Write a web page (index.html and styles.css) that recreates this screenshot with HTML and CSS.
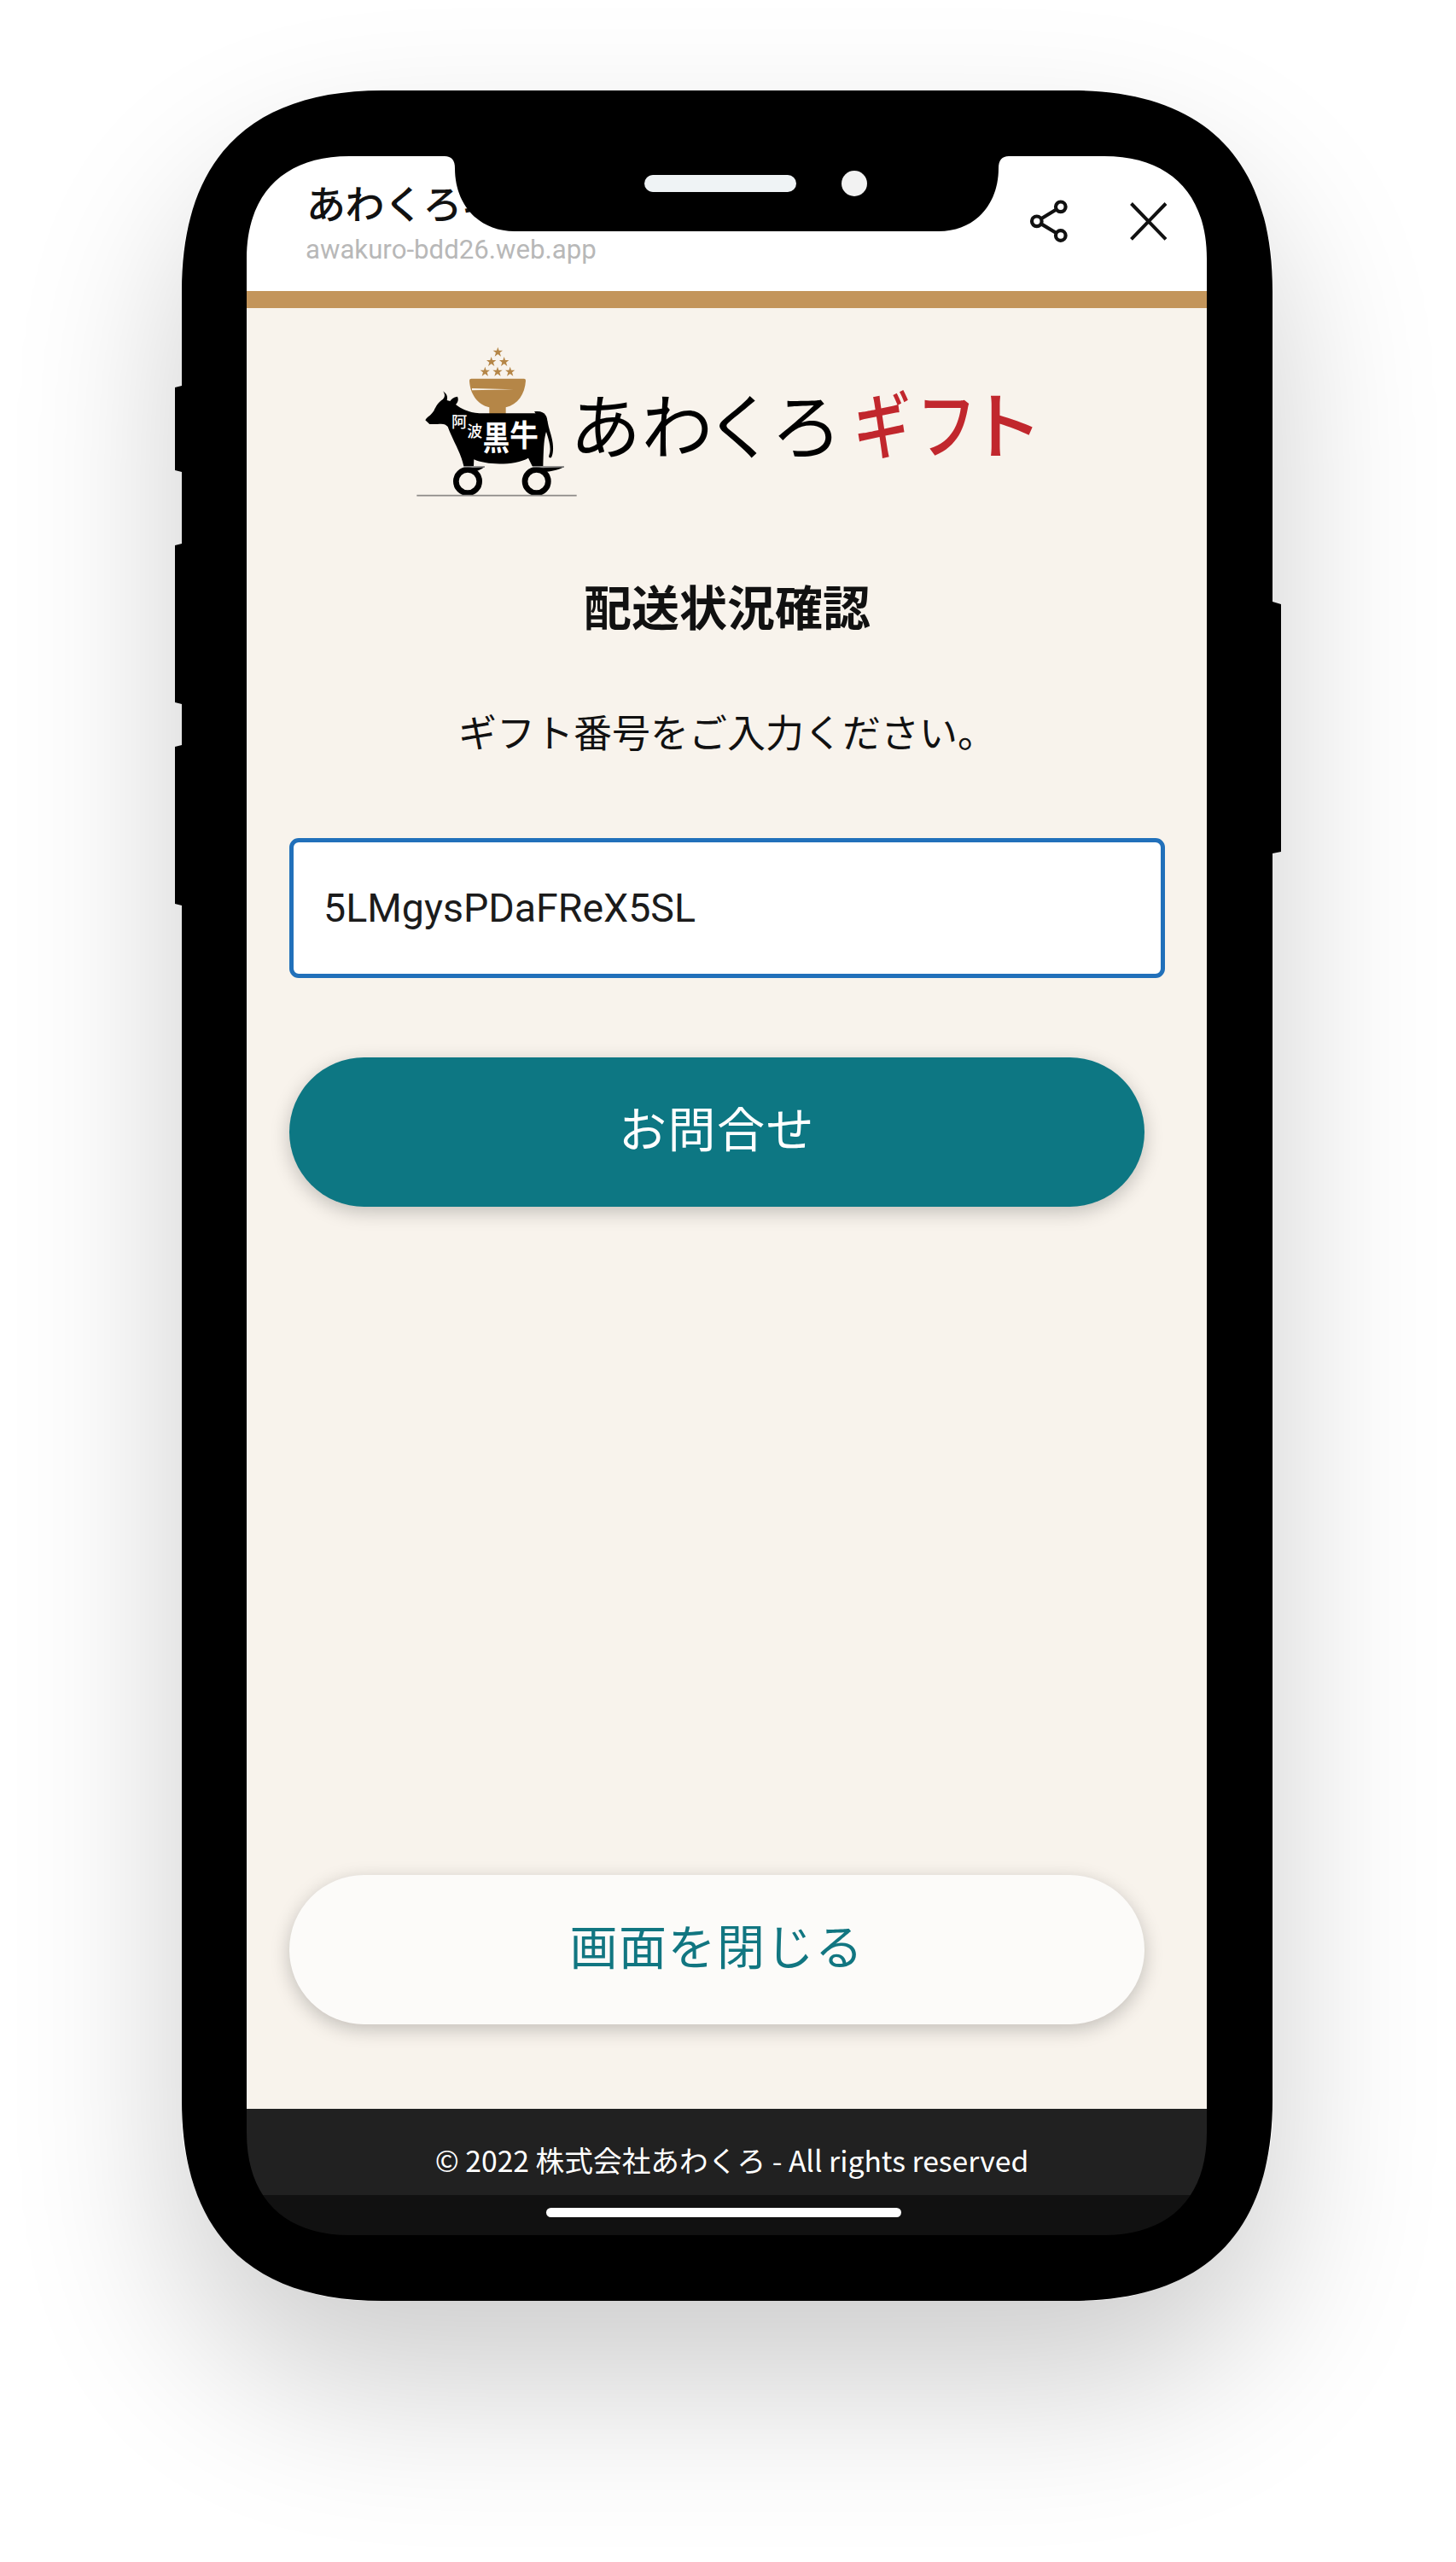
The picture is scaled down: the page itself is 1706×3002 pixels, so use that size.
FILE: index.html
```html
<!DOCTYPE html>
<html lang="ja">
<head>
<meta charset="utf-8">
<title>あわくろギフト</title>
<link rel="stylesheet" href="styles.css">
</head>
<body>
<main class="stage">
  <div class="phone">
    <div class="screen">
      <header class="browser-bar">
        <div class="page-info">
          <div class="page-title">あわくろギフト</div>
          <div class="page-url">awakuro-bdd26.web.app</div>
        </div>
        <svg class="bar-icon" width="50" height="50" viewBox="0 0 50 50" fill="none" stroke="#111" stroke-width="4.2">
          <circle cx="38.8" cy="8.3" r="5.8"/><circle cx="10.8" cy="25.3" r="5.8"/><circle cx="38.8" cy="42" r="5.8"/>
          <path d="M16 22.2 33.6 11.5M16 28.4 33.6 39"/>
        </svg>
        <svg class="bar-icon" width="50" height="50" viewBox="0 0 50 50" fill="none" stroke="#111" stroke-width="4">
          <path d="M4.500 4.500 45 46.3M45 4.500 4.500 46.3"/>
        </svg>
      </header>
      <div class="page">
        <svg class="logo" width="760" height="210" viewBox="0 0 2280 630">
          <g fill="#b58647">
            <g>
              <path id="star" d="M310 50l4 12h13l-10 8 4 13-11-8-11 8 4-13-10-8h13z"/>
              <use href="#star" x="-23" y="34"/><use href="#star" x="22" y="34"/>
              <use href="#star" x="-45" y="69"/><use href="#star" x="-1" y="69"/><use href="#star" x="43" y="69"/>
            </g>
            <path d="M217 161H402Q408 161 408 168C405 216 380 252 338 262V290H280V262C238 252 212 214 210 168Q210 161 217 161Z"/>
          </g>
          <path d="M219 195L365 198.500L219 202Z" fill="#f8f3ec"/>
          <path d="M117 205C132 215 134 225 131 237L142 240C147 232 154 226 168 224C173 235 169 244 162 252C180 266 205 280 245 283H448C474 283 481 296 486 318C491 345 503 370 504 400C505 420 501 434 497 439C491 440 488 437 490 431C499 407 491 382 480 348C471 375 471 410 469 469H431L417 440C370 467 270 466 226 445L225 469H190C180 420 154 384 134 330C127 321 117 318 98 321H70L55 307C60 296 70 293 77 284C90 271 92 252 111 238C125 229 126 217 117 205Z"/>
          <path d="M438 277C475 271 486 294 484 320L455 300Z"/>
          <g fill="none" stroke="#000">
            <circle cx="204" cy="522" r="41" stroke-width="20"/>
            <circle cx="446" cy="522" r="41" stroke-width="20"/>
          </g>
          <path d="M190 476 264 471C250 482 236 486 224 490M432 476 543 471C520 484 490 488 464 490"/>
          <path d="M190 471H264M432 471H543" stroke="#777" stroke-width="4"/>
          <path d="M25 572H587" stroke="#8d8a87" stroke-width="5"/>
          <g class="cow-text">
            <text x="147" y="334" font-size="55">阿</text>
            <text x="202" y="366" font-size="54">波</text>
            <text transform="translate(257 412) scale(.87 1.08)" font-size="108" class="heavy">黒</text>
            <text transform="translate(352 400) scale(.95 1)" font-size="106" class="heavy">牛</text>
          </g>
          <text class="logo-black" y="424" x="563 815 1038 1270">あわくろ</text>
          <g class="logo-red">
            <text transform="translate(1560 424) scale(.78 1)">ギ</text>
            <text transform="translate(1781 424) scale(.82 1)">フ</text>
            <text transform="translate(1957 424) scale(1.05 1)">ト</text>
          </g>
        </svg>
        <h1 class="heading">配送状況確認</h1>
        <p class="lead">ギフト番号をご入力ください。</p>
        <div class="field">5LMgysPDaFReX5SL</div>
        <div class="button primary">お問合せ</div>
        <div class="button secondary">画面を閉じる</div>
      </div>
      <footer class="copyright">© 2022 株式会社あわくろ - All rights reserved</footer>
      <div class="home-area"><div class="home-bar"></div></div>
    </div>
    <svg class="frame" width="1298" height="2590" viewBox="203 106 1298 2590">
      <path fill-rule="evenodd" d="M213 341C213 186 293 106 448 106H1256C1411 106 1491 186 1491 341V2461C1491 2616 1411 2696 1256 2696H448C293 2696 213 2616 213 2461ZM289 303C289 227 333 183 409 183H521Q533 183 533 197C533 240 561 271 603 271H1100C1142 271 1170 240 1170 197Q1170 183 1182 183H1294C1370 183 1414 227 1414 303V2499C1414 2575 1370 2619 1294 2619H409C333 2619 289 2575 289 2499Z"/>
      <path d="M213 452 205 454V551L213 553ZM213 637 205 639V823L213 825ZM213 873 205 875V1059L213 1061ZM1491 705 1501 708V998L1491 1000Z"/>
      <rect x="755" y="205" width="178" height="20" rx="10" fill="#eff3f5"/>
      <circle cx="1001" cy="215" r="15" fill="#f2f2f2"/>
    </svg>
  </div>
</main>
</body>
</html>
```
FILE: styles.css
```css
* { box-sizing: border-box; }
body { margin: 0; background: #fff; font-family: "Noto Sans CJK JP", sans-serif; color: #111; }
.stage { width: 1706px; height: 3002px; padding: 106px 0 0 213px; overflow: hidden; }
.phone { position: relative; width: 1278px; height: 2590px; padding: 77px 77px 77px 76px; border-radius: 215px; box-shadow: 0 96px 200px rgba(0, 0, 0, .2); }
.frame { position: absolute; left: -10px; top: 0; }
.screen { display: flex; flex-direction: column; height: 2436px; background: #f8f3ec; border-radius: 80px; overflow: hidden; }

.browser-bar { display: flex; align-items: flex-start; height: 178px; padding: 25px 43px 0 69px; background: #fff; border-bottom: 20px solid #c3955b; gap: 67px; }
.page-info { flex: 1; }
.page-title { font-size: 46px; line-height: 56px; font-weight: 500; letter-spacing: -.5px; padding-left: 1px; white-space: nowrap; }
.page-url { margin-top: 10px; font: 31.2px/38px Roboto, sans-serif; color: #b8b8b8; white-space: nowrap; }
.bar-icon { margin-top: 26px; flex: none; }

.page { flex: 1; display: flex; flex-direction: column; padding: 29px 49px 0 50px; }
.logo { display: block; margin-left: 141px; flex: none; }
.logo text { font-family: "Noto Sans CJK JP", sans-serif; }
.cow-text { fill: #fff; font-weight: 500; }
.cow-text .heavy { font-weight: 700; }
.logo-black { font-size: 250px; font-weight: 400; fill: #000; }
.logo-red { font-size: 258px; font-weight: 500; fill: #c1272d; }
.heading { margin: 69px 0 0; font-size: 56px; line-height: 80px; font-weight: 700; text-align: center; }
.lead { margin: 76px 0 0; font-size: 45px; line-height: 64px; text-align: center; }
.field { margin-top: 93px; height: 164px; border: 5px solid #2170ba; border-radius: 11px; background: #fff; padding: 0 35px; font: 46.5px/154px Roboto, sans-serif; color: #1b1b1b; }
.button { width: 1002px; height: 175px; border-radius: 88px; font-size: 56px; line-height: 161px; text-align: center; letter-spacing: 1.5px; box-shadow: 0 6px 22px rgba(0, 0, 0, .22); }
.primary { margin-top: 93px; background: #0d7783; color: #fff; }
.secondary { margin-top: 783px; background: #fcfbf9; color: #117681; }

.copyright { height: 101px; background: #212121; color: #fff; font-size: 33.7px; line-height: 120px; text-align: center; padding-left: 12px; white-space: nowrap; }
.home-area { height: 47px; padding-top: 15px; background: #111; }
.home-bar { width: 416px; height: 11px; margin-left: 351px; border-radius: 6px; background: #fff; }
```
